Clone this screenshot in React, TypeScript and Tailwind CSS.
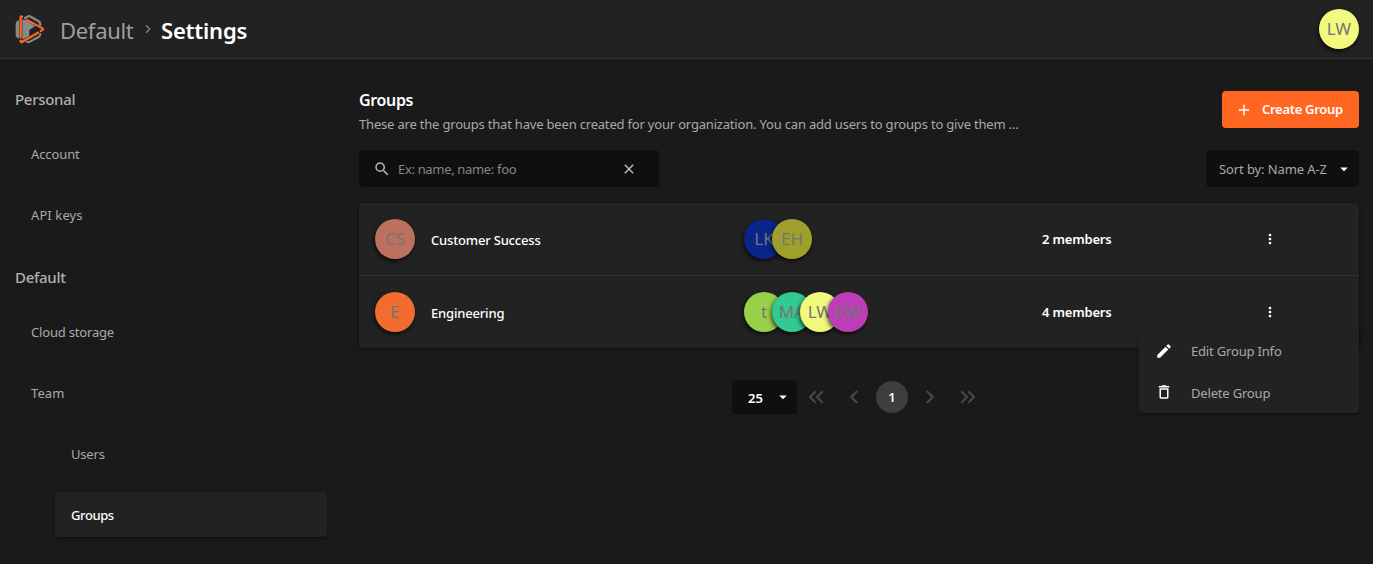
import React from "react";
import {
  MdAdd,
  MdArrowDropDown,
  MdClose,
  MdCreate,
  MdDeleteOutline,
  MdMoreVert,
  MdSearch,
} from "react-icons/md";
import { ChevronLeft, ChevronRight, ChevronsLeft, ChevronsRight } from "lucide-react";

type Person = { initials: string; color: string };

const groups: { name: string; avatar: Person; members: Person[] }[] = [
  {
    name: "Customer Success",
    avatar: { initials: "CS", color: "bg-[#bd705e]" },
    members: [
      { initials: "LK", color: "bg-[#0a2489]" },
      { initials: "EH", color: "bg-[#9f9f2b]" },
    ],
  },
  {
    name: "Engineering",
    avatar: { initials: "E", color: "bg-[#f26d2d]" },
    members: [
      { initials: "t", color: "bg-[#98d04a]" },
      { initials: "MA", color: "bg-[#30ca92]" },
      { initials: "LW", color: "bg-[#f2f97e]" },
      { initials: "KW", color: "bg-[#bb3eb8]" },
    ],
  },
];

function Avatar({ initials, color, className = "" }: Person & { className?: string }) {
  return (
    <span
      className={`flex size-10 shrink-0 items-center justify-center rounded-full text-[17px] tracking-normal text-[#757575] shadow-[-1px_2px_4px_rgba(0,0,0,0.7)] ${color} ${className}`}
    >
      {initials}
    </span>
  );
}

function Logo() {
  return (
    <svg width="30" height="30" viewBox="21 18 90 90" fill="none" strokeLinecap="round" strokeLinejoin="round">
      <path d="M33 36V92Q23 88 23 80V48Q23 40 33 36Z" fill="#8a8a8a" />
      <path d="M43 34L52 36L82 54L64 66V84L43 95Z" fill="#8a8a8a" />
      <path d="M51 30L58 26Q63 23 68 26L92 40Q97 43 97 50" stroke="#8a8a8a" strokeWidth="7" />
      <path d="M97 78Q97 84 92 87L66 101Q62 103 57 102" stroke="#8a8a8a" strokeWidth="6" />
      <path d="M38 88V28Q38 24 42 26" stroke="#ff6622" strokeWidth="7" />
      <path d="M57 36L104 61Q107 64 104 66L98 69" stroke="#ff6622" strokeWidth="6" />
      <path d="M90 74L42 102Q38 104 38 98" stroke="#ff6622" strokeWidth="7" />
    </svg>
  );
}

const navText = "flex h-[45px] items-center rounded-[4px] pt-[2px] text-[13px] text-[#a9a9a9]";
const navHeading = "flex h-8 items-center text-[15px] font-medium tracking-[-0.3px] text-[#b0b0b0]";

export default function App() {
  return (
    <div className="flex h-[564px] flex-col overflow-hidden bg-[#1a1a1a] font-['Noto_Sans',sans-serif] tracking-[-0.18px] text-white">
      <header className="flex h-[59px] shrink-0 items-center border-b border-[#323232] bg-[#222222] pr-[14px] pl-[15px]">
        <Logo />
        <span className="ml-[15px] w-[74px] pt-[2px] text-[22px] tracking-[-0.3px] whitespace-nowrap text-[#9f9f9f]">Default</span>
        <ChevronRight className="mx-[7px] size-[14px] text-[#858585]" strokeWidth={2} />
        <span className="-ml-px pt-[2px] text-[22px] font-semibold tracking-[-0.2px]">Settings</span>
        <Avatar initials="LW" color="bg-[#f2f97e]" className="ml-auto" />
      </header>

      <div className="flex min-h-0 flex-1">
        <nav className="flex w-[343px] shrink-0 flex-col pt-6 pr-4 pl-[15px]">
          <h2 className={navHeading}>Personal</h2>
          <div className="mt-4 flex flex-col gap-4">
            <a className={`${navText} pl-4 tracking-[-0.1px]`}>Account</a>
            <a className={`${navText} pl-4 tracking-[0.1px]`}>API keys</a>
          </div>
          <h2 className={`mt-6 ${navHeading}`}>Default</h2>
          <div className="mt-4 flex flex-col gap-4">
            <a className={`${navText} pl-4`}>Cloud storage</a>
            <a className={`${navText} pl-4 tracking-[0.1px]`}>Team</a>
            <div className="flex flex-col gap-4 pl-10">
              <a className={`${navText} pl-4`}>Users</a>
              <a className="flex h-[45px] items-center rounded-[4px] bg-[#222222] pt-[2px] pl-4 text-[13px] font-medium tracking-[-0.4px] text-white shadow-[0_1px_3px_rgba(0,0,0,0.5)]">
                Groups
              </a>
            </div>
          </div>
        </nav>

        <main className="flex flex-1 flex-col pt-8 pr-[14px] pl-4">
          <div className="flex h-[37px] items-start justify-between">
            <div className="-mt-[3px]">
              <h1 className="text-[16px] leading-[24px] font-semibold tracking-[-0.35px]">Groups</h1>
              <p className="text-[13px] leading-[24px] tracking-[-0.19px] whitespace-nowrap text-[#a9a9a9]">
                These are the groups that have been created for your organization. You can add users to groups to give them ...
              </p>
            </div>
            <button className="flex h-[37px] w-[137px] items-center rounded-[4px] bg-[#ff6622] pl-[13px] text-[13px] font-semibold">
              <MdAdd className="size-[18px]" />
              <span className="ml-[9px] tracking-[-0.3px] whitespace-nowrap">Create Group</span>
            </button>
          </div>

          <div className="mt-[22px] flex h-[37px] justify-between">
            <div className="flex w-[300px] items-center rounded-[4px] bg-[#0f0f0f] pr-[22px] pl-[14px]">
              <MdSearch className="size-[18px] text-[#b5b5b5]" />
              <span className="ml-[7px] pt-[2px] text-[13px] tracking-[-0.33px] text-[#858585]">Ex: name, name: foo</span>
              <MdClose className="ml-auto size-4 text-[#c5c5c5]" />
            </div>
            <div className="flex w-[153px] items-center rounded-[4px] bg-[#0f0f0f] pr-[6px] pl-[13px]">
              <span className="pt-[2px] text-[13px] tracking-[-0.1px] whitespace-nowrap text-[#a9a9a9]">Sort by: Name A-Z</span>
              <MdArrowDropDown className="ml-auto size-[18px]" />
            </div>
          </div>

          <div className="relative mt-4 shrink-0 rounded-[4px] bg-[#222222] shadow-[0_1px_4px_rgba(0,0,0,0.5)]">
            {groups.map((group, i) => (
              <div key={group.name} className={`flex items-center pl-4 ${i > 0 ? "h-[73px] border-t border-[#303030]" : "h-[72px]"}`}>
                <Avatar {...group.avatar} />
                <span className="ml-4 w-[313px] pt-[4px] text-[13px] font-medium">{group.name}</span>
                <div className="flex w-[298px]">
                  {group.members.map((m, j) => (
                    <Avatar key={m.initials} {...m} className={j > 0 ? "-ml-3" : ""} />
                  ))}
                </div>
                <span className="w-[220px] pt-[2px] text-[13px] font-semibold">{group.members.length} members</span>
                <MdMoreVert className="size-4" />
              </div>
            ))}
            <div className="absolute top-[127px] right-0 flex h-[83px] w-[220px] flex-col rounded-[4px] bg-[#222222] text-[13px] text-[#a9a9a9] shadow-[0_2px_3px_rgba(0,0,0,0.35)]">
              <div className="flex h-[42px] items-center pl-4">
                <MdCreate className="size-[18px] text-white" />
                <span className="ml-[18px] pt-[2px]">Edit Group Info</span>
              </div>
              <div className="flex h-[42px] items-center pl-4">
                <MdDeleteOutline className="size-[18px] text-white" />
                <span className="ml-[18px] pt-[2px]">Delete Group</span>
              </div>
            </div>
          </div>

          <div className="mt-8 ml-[373px] flex h-[34px] items-center text-[#484848]">
            <div className="flex h-[34px] w-[65px] items-center rounded-[4px] bg-[#0f0f0f] pr-[5px] pl-4 text-[13px] font-semibold text-white">
              <span className="pt-[3px] tracking-normal">25</span>
              <MdArrowDropDown className="ml-auto size-[18px]" />
            </div>
            <ChevronsLeft className="ml-[7px] size-6" strokeWidth={2.2} />
            <ChevronLeft className="ml-[15px] size-[22px]" strokeWidth={2.4} />
            <span className="ml-[11px] flex size-8 items-center justify-center rounded-full bg-[#3e3e3e] pt-[2px] text-[13px] font-semibold text-white">1</span>
            <ChevronRight className="ml-[11px] size-[22px]" strokeWidth={2.4} />
            <ChevronsRight className="ml-[15px] size-6" strokeWidth={2.2} />
          </div>
        </main>
      </div>
    </div>
  );
}
